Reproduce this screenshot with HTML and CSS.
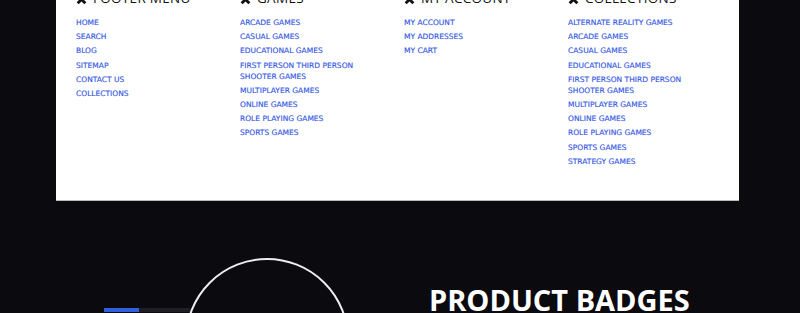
FILE: index.html
```html
<!DOCTYPE html>
<html lang="en">
<head>
    <meta charset="UTF-8">
    <meta name="viewport" content="width=device-width, initial-scale=1.0">
    <title>Footer</title>
    <link rel="stylesheet" href="styles.css">
</head>
<body>
    <div class="footer-panel">
        <div class="footer-col">
            <h4 class="footer-title"><svg class="x-icon" viewBox="0 0 10 10"><path d="M1.5 1.5 L8.5 8.5 M8.5 1.5 L1.5 8.5"/></svg>Footer menu</h4>
            <ul class="footer-links">
                <li><a href="#">Home</a></li>
                <li><a href="#">Search</a></li>
                <li><a href="#">Blog</a></li>
                <li><a href="#">Sitemap</a></li>
                <li><a href="#">Contact us</a></li>
                <li><a href="#">Collections</a></li>
            </ul>
        </div>
        <div class="footer-col">
            <h4 class="footer-title"><svg class="x-icon" viewBox="0 0 10 10"><path d="M1.5 1.5 L8.5 8.5 M8.5 1.5 L1.5 8.5"/></svg>Games</h4>
            <ul class="footer-links">
                <li><a href="#">Arcade Games</a></li>
                <li><a href="#">Casual Games</a></li>
                <li><a href="#">Educational Games</a></li>
                <li><a href="#">First Person Third Person Shooter Games</a></li>
                <li><a href="#">Multiplayer Games</a></li>
                <li><a href="#">Online Games</a></li>
                <li><a href="#">Role Playing Games</a></li>
                <li><a href="#">Sports Games</a></li>
            </ul>
        </div>
        <div class="footer-col">
            <h4 class="footer-title"><svg class="x-icon" viewBox="0 0 10 10"><path d="M1.5 1.5 L8.5 8.5 M8.5 1.5 L1.5 8.5"/></svg>My account</h4>
            <ul class="footer-links">
                <li><a href="#">My account</a></li>
                <li><a href="#">My addresses</a></li>
                <li><a href="#">My cart</a></li>
            </ul>
        </div>
        <div class="footer-col">
            <h4 class="footer-title"><svg class="x-icon" viewBox="0 0 10 10"><path d="M1.5 1.5 L8.5 8.5 M8.5 1.5 L1.5 8.5"/></svg>Collections</h4>
            <ul class="footer-links">
                <li><a href="#">Alternate Reality Games</a></li>
                <li><a href="#">Arcade Games</a></li>
                <li><a href="#">Casual Games</a></li>
                <li><a href="#">Educational Games</a></li>
                <li><a href="#">First Person Third Person Shooter Games</a></li>
                <li><a href="#">Multiplayer Games</a></li>
                <li><a href="#">Online Games</a></li>
                <li><a href="#">Role Playing Games</a></li>
                <li><a href="#">Sports Games</a></li>
                <li><a href="#">Strategy Games</a></li>
            </ul>
        </div>
    </div>

    <section class="badges">
        <div class="badges-visual">
            <div class="slide-bar"><span class="slide-fill"></span></div>
            <div class="circle"></div>
        </div>
        <h2 class="badges-title">Product badges</h2>
    </section>
</body>
</html>
```

FILE: styles.css
```css
body {
    margin: 0;
    background-color: #0b0a0f;
    font-family: "DejaVu Sans", "Liberation Sans", sans-serif;
    overflow: hidden;
}

.footer-panel {
    display: grid;
    grid-template-columns: repeat(4, 164px);
    background-color: #fff;
    margin: -12px 61px 0 56px;
    padding: 0 20px 30px;
    border-bottom: 1px solid #bbb;
}

.footer-title {
    display: flex;
    align-items: center;
    margin: 0 0 9px;
    height: 20px;
    font-family: "Open Sans", "DejaVu Sans", sans-serif;
    font-size: 13.5px;
    font-weight: normal;
    line-height: 20px;
    text-transform: uppercase;
    letter-spacing: 0.3px;
    color: #111;
    white-space: nowrap;
}

.x-icon {
    width: 11px;
    height: 11px;
    margin: 2px 6px 0 0;
    fill: none;
    stroke: #111;
    stroke-width: 2.6;
}

.footer-links {
    list-style: none;
    margin: 0;
    padding: 0;
}

.footer-links li {
    max-width: 130px;
    font-size: 7.5px;
    line-height: 11px;
    margin-bottom: 3.2px;
    text-transform: uppercase;
}

.footer-links a {
    color: #3557e4;
    text-decoration: none;
    -webkit-text-stroke: 0.15px #3557e4;
}

.badges {
    display: flex;
    padding: 57px 0 0 104px;
}

.badges-visual {
    position: relative;
    width: 325px;
    height: 120px;
}

.slide-bar {
    position: absolute;
    left: 0;
    top: 50px;
    width: 86px;
    height: 4px;
    background-color: #1f1e24;
}

.slide-fill {
    display: block;
    width: 35px;
    height: 100%;
    background-color: #3060e0;
}

.circle {
    margin-left: 81px;
    width: 160px;
    height: 160px;
    border: 2px solid #eee;
    border-radius: 50%;
}

.badges-title {
    margin: 26px 0 0;
    font-family: "Open Sans", "DejaVu Sans", sans-serif;
    font-size: 29px;
    line-height: 32px;
    font-weight: bold;
    text-transform: uppercase;
    color: #fff;
    white-space: nowrap;
}
```
